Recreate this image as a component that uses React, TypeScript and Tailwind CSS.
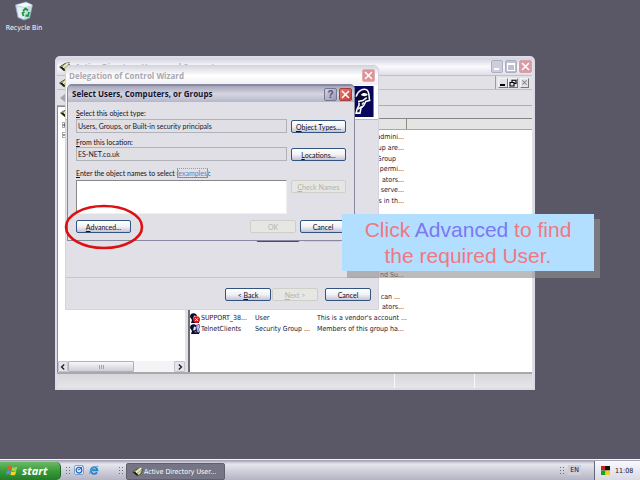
import React from "react";

type BtnProps = {
  children: React.ReactNode;
  className?: string;
  disabled?: boolean;
};

function Btn({ children, className = "", disabled = false }: BtnProps) {
  return (
    <button
      type="button"
      disabled={disabled}
      className={`flex h-[13px] items-center justify-center rounded-[2px] border whitespace-nowrap ${
        disabled
          ? "border-[#cfcfca] bg-[#e6e6e4] text-[#b4b4ac]"
          : "border-[#33547f] bg-linear-to-b from-white via-[#f1f1f6] to-[#c4c4d6] text-[#101020]"
      } ${className}`}
    >
      <span>{children}</span>
    </button>
  );
}

function BookIcon({ className = "" }: { className?: string }) {
  return (
    <svg viewBox="0 0 11 11" className={`h-[11px] w-[11px] shrink-0 ${className}`} aria-hidden="true">
      <path d="M0.5 6 L6 2.5 L10.5 3.5 L8.5 8.5 L5 9.8 Z" fill="#d8dc98" stroke="#3c3c20" strokeWidth="0.8" />
      <path d="M3 6 L8 1.5 L10.5 1.5 L9 4 L4.5 7.5Z" fill="#f2f4d8" stroke="#6c6c48" strokeWidth="0.6" />
      <path d="M1 6.2 L5 9.6 L6.2 8.6 L2.6 5.5Z" fill="#16160c" />
    </svg>
  );
}

function CloseX() {
  return (
    <svg viewBox="0 0 12 12" className="h-[11px] w-[11px] shrink-0" aria-hidden="true">
      <path d="M2.2 2.2 L9.8 9.8 M9.8 2.2 L2.2 9.8" stroke="white" strokeWidth="1.7" />
    </svg>
  );
}

function PersonIcon({ blocked = false }: { blocked?: boolean }) {
  return (
    <svg viewBox="0 0 10 10" className="h-[10px] w-[10px] shrink-0" aria-hidden="true">
      <path d="M0 4 C0 0 3 0 5 0.5 L7 2 L6 4 L9 6 L9 10 L1 10 L2 7 Z" fill="#0a0a30" />
      <path d="M4 2.5 L6 3 L5.5 6 L3 6.5Z" fill="#e8e8ee" />
      {blocked ? (
        <g>
          <circle cx="6.6" cy="6.6" r="3.4" fill="#e41616" />
          <path d="M5.2 5.2 L8 8 M8 5.2 L5.2 8" stroke="white" strokeWidth="0.9" />
        </g>
      ) : (
        <path d="M6 1.5 L9 0 L10 3 L8.5 5 L10 9 L7 8 Z M4 8 L6 6.8 L7 9Z" fill="#b8bce8" stroke="#101050" strokeWidth="0.5" />
      )}
    </svg>
  );
}

type Row = { name?: string; type?: string; desc?: string; align?: string; blocked?: boolean };

const END = "text-right";

const rows: Row[] = [
  { desc: "admini...", align: END },
  { desc: "up are...", align: END },
  { desc: "Group", align: "text-right pr-[8px]" },
  { desc: "permi...", align: END },
  { desc: "ators...", align: END },
  { desc: "serve...", align: END },
  { desc: "s in th...", align: END },
  {},
  {},
  {},
  {},
  {},
  {},
  { desc: "nd Su...", align: END },
  {},
  { desc: "can ...", align: "text-right pr-[4px]" },
  { desc: "ators...", align: END },
  { name: "SUPPORT_38...", type: "User", desc: "This is a vendor's account ...", blocked: true },
  { name: "TelnetClients", type: "Security Group ...", desc: "Members of this group ha..." },
];

function MainWindow() {
  return (
    <section className="absolute top-[56px] left-[55px] flex h-[334px] w-[480px] flex-col rounded-t-[5px] border-2 border-[#dcdce8] bg-[#e2e2e6] pr-px">
      <header className="flex h-[17px] shrink-0 items-center gap-[5px] bg-linear-to-b from-[#d2d2e0] via-[#fafafc] to-[#dedee8] pl-[2px]">
        <BookIcon />
        <h1 className="flex-1 font-['Open_Sans',sans-serif] text-[8px] leading-[10px] font-bold text-[#b4b4be]">
          Active Directory Users and Computers
        </h1>
        <div className="flex gap-[2px]">
          <button type="button" aria-label="Minimise" className="flex h-[13px] w-[12px] items-end rounded-[2px] border border-[#aeaec2] bg-[#cdcddb] p-[2px]">
            <span className="h-[2px] w-[5px] bg-white" />
          </button>
          <button type="button" aria-label="Maximise" className="flex h-[13px] w-[12px] items-center justify-center rounded-[2px] border border-[#aeaec2] bg-[#c0c0d4]">
            <span className="h-[8px] w-[8px] border border-t-2 border-white" />
          </button>
          <button type="button" aria-label="Close window" className="flex h-[13px] w-[13px] items-center justify-center rounded-[2px] border border-[#cfa4ae] bg-[#dc9ba4]">
            <CloseX />
          </button>
        </div>
      </header>

      <div className="flex h-[15px] shrink-0 border-t border-b border-[#c0c0c6]">
        <div className="flex flex-1 items-center border-r border-[#9c9ca4] pl-[2px]">
          <BookIcon />
        </div>
        <div className="flex items-center pr-[3px] pl-[2px]">
          <button type="button" aria-label="Minimise child" className="flex h-[10px] w-[10px] items-end border border-[#f6f6f6] border-r-[#777] border-b-[#777] p-px">
            <span className="h-[2px] w-[5px] bg-black" />
          </button>
          <button type="button" aria-label="Restore child" className="flex h-[10px] w-[10px] items-center justify-center border border-[#f6f6f6] border-r-[#777] border-b-[#777]">
            <svg viewBox="0 0 8 8" className="h-[8px] w-[8px] shrink-0" aria-hidden="true">
              <path d="M3 3 V1.2 H7 V4.5 H5.2 M1 3.5 H5 V7 H1 Z" fill="none" stroke="black" strokeWidth="1.1" />
            </svg>
          </button>
          <button type="button" aria-label="Close child" className="ml-[2px] flex h-[10px] w-[9px] items-center justify-center border border-[#f6f6f6] border-r-[#777] border-b-[#777]">
            <svg viewBox="0 0 8 8" className="h-[7px] w-[7px] shrink-0" aria-hidden="true">
              <path d="M1.5 1.5 L6.5 6.5 M6.5 1.5 L1.5 6.5" stroke="#888" strokeWidth="1.2" />
            </svg>
          </button>
        </div>
      </div>
      <div className="flex h-[16px] shrink-0 items-center border-b border-[#aaaab0] pl-[3px]">
        <svg viewBox="0 0 6 8" className="h-[8px] w-[6px]" aria-hidden="true">
          <path d="M5 0 V8 L0 4Z" fill="#a4a4ac" />
        </svg>
      </div>

      <div className="flex min-h-0 flex-1 border-b-2 border-[#a9a9a9]">
        <nav aria-label="Directory tree" className="flex w-[128px] flex-col border-t border-l border-[#8c8c8c] bg-white">
          <div className="flex flex-1 flex-col items-start gap-[4px] pl-[2px]">
            <BookIcon />
            <span className="ml-[2px] flex h-[6px] w-[6px] items-center justify-center border border-[#aaa]">
              <svg viewBox="0 0 4 4" className="h-[4px] w-[4px]" aria-hidden="true">
                <path d="M0 2 H4 M2 0 V4" stroke="#333" strokeWidth="1" />
              </svg>
            </span>
            <span className="ml-[2px] flex h-[6px] w-[6px] items-center justify-center border border-[#aaa]">
              <svg viewBox="0 0 4 4" className="h-[4px] w-[4px]" aria-hidden="true">
                <path d="M0 2 H4" stroke="#333" strokeWidth="1" />
              </svg>
            </span>
          </div>
          <div className="flex h-[11px] items-stretch bg-[#f4f4f6]">
            <button type="button" aria-label="Scroll left" className="flex w-[10px] items-center justify-center rounded-[1px] border border-[#c4c4ce] bg-[#e4e4ec]">
              <svg viewBox="0 0 6 6" className="h-[6px] w-[6px]" aria-hidden="true">
                <path d="M4.2 0.6 L1.6 3 L4.2 5.4" fill="none" stroke="#222" strokeWidth="1.4" />
              </svg>
            </button>
            <div className="flex flex-1">
              <div className="flex w-[66px] items-center justify-center gap-px rounded-[1px] border border-[#b0b0bc] bg-linear-to-b from-[#f8f8fa] to-[#ceced8]">
                <span className="h-[4px] w-px bg-[#a0a0b0]" />
                <span className="h-[4px] w-px bg-[#a0a0b0]" />
                <span className="h-[4px] w-px bg-[#a0a0b0]" />
              </div>
            </div>
            <button type="button" aria-label="Scroll right" className="flex w-[11px] items-center justify-center rounded-[1px] border border-[#c4c4ce] bg-[#e4e4ec]">
              <svg viewBox="0 0 6 6" className="h-[6px] w-[6px]" aria-hidden="true">
                <path d="M1.8 0.6 L4.4 3 L1.8 5.4" fill="none" stroke="#222" strokeWidth="1.4" />
              </svg>
            </button>
          </div>
        </nav>
        <div className="w-[3px] bg-[#e2e2e6]" />
        <div className="flex min-w-0 flex-1 flex-col border-l-2 border-[#707074] bg-white">
          <div className="h-[13px] shrink-0 border-b border-[#85858a] bg-[#e2e2e6]" />
          <div className="flex h-[11px] shrink-0 border-b border-[#a8a89c] bg-[#e4e4e2]">
            <div className="w-[217px] border-r border-[#8c8c84]" />
          </div>
          <ul className="mt-[2px] flex h-[202px] flex-col whitespace-nowrap text-[#181838]">
            {rows.map((r, i) => (
              <li key={i} className="flex flex-1 items-center">
                <span className="flex w-[65px] items-center gap-px">
                  {r.name ? <PersonIcon blocked={r.blocked} /> : null}
                  <span>{r.name}</span>
                </span>
                <span className="w-[62px]">{r.type}</span>
                <span className={`w-[87px] ${r.align ?? ""}`}>{r.desc}</span>
              </li>
            ))}
          </ul>
        </div>
      </div>
      <footer className="flex h-[14px] shrink-0 bg-linear-to-b from-[#d8d8dc] to-[#e6e6ea]">
        <div className="flex-1 border-r border-[#f8f8f8]" />
        <div className="w-[80px] border-r border-[#f8f8f8]" />
        <div className="w-[57px]" />
      </footer>
    </section>
  );
}

function WizardDialog() {
  return (
    <section className="absolute top-[65px] left-[65px] flex h-[245px] w-[314px] flex-col rounded-t-[5px] border border-[#d4d4de] bg-[#e0e0e6] font-[Lato,sans-serif]">
      <header className="flex h-[19px] shrink-0 items-center justify-between rounded-t-[5px] bg-linear-to-b from-[#d6d6e0] via-white to-[#efeff4] pr-[3px] pl-[3px]">
        <h2 className="font-['Open_Sans',sans-serif] text-[8px] leading-[10px] font-bold text-[#a8a8b0]">Delegation of Control Wizard</h2>
        <button type="button" aria-label="Close wizard" className="flex h-[13px] w-[13px] items-center justify-center rounded-[2px] border border-[#e0b0b0] bg-[#dc9498]">
          <CloseX />
        </button>
      </header>
      <div className="flex h-[35px] shrink-0 items-start justify-end border-b border-[#b8b8c0] bg-white pt-px pr-[4px]">
        <svg viewBox="0 0 30 32" className="h-[31px] w-[30px]" aria-hidden="true">
          <rect width="30" height="32" fill="#06065c" />
          <path d="M12 11 C14 4 20 2.5 23 4 C26 6 25 11 26 15 L22 16 L20 20 L17 23 L16 28 L12 28 L13 24 L15 20 L15 17" fill="#080830" stroke="white" strokeWidth="1.6" />
          <path d="M17 9 C19 6 23 7 24 9 C22 11 19 11 17 9Z" fill="white" />
          <path d="M14 16 L19 15 L23 12 M18 19 L20 17 M14 24 L18 21" fill="none" stroke="white" strokeWidth="1.5" />
        </svg>
      </div>
      <div className="flex flex-1 items-end justify-end gap-[3px] border-b border-[#c6c6cc] pr-[37px] pb-[35px]">
        <Btn className="w-[44px]">Add...</Btn>
        <Btn className="w-[38px]" disabled>
          Remove
        </Btn>
      </div>
      <div className="flex h-[31px] shrink-0 items-start justify-end pt-[10px] pr-[7px]">
        <Btn className="w-[46px]">
          &lt; <u>B</u>ack
        </Btn>
        <Btn className="ml-px w-[46px]" disabled>
          <u>N</u>ext &gt;
        </Btn>
        <Btn className="ml-[7px] w-[46px]">Cancel</Btn>
      </div>
    </section>
  );
}

function SelectDialog() {
  const field = "h-[14px] w-full border border-[#b2b2ba] bg-[#dfdfe4] px-px text-[#202030] outline-none";
  return (
    <section className="absolute top-[84px] left-[67px] flex h-[157px] w-[288px] flex-col rounded-t-[5px] border border-t-2 border-[#8888a0] bg-[#e0e0e6] font-[Lato,sans-serif]">
      <header className="flex h-[16px] shrink-0 items-center gap-[2px] rounded-t-[4px] bg-linear-to-b from-[#a6a6bc] via-[#d6d6e2] to-[#b6b6ca] pr-[2px] pl-[4px]">
        <h2 className="flex-1 font-['Open_Sans',sans-serif] text-[8px] leading-[10px] font-bold text-[#14142c]">Select Users, Computers, or Groups</h2>
        <button type="button" aria-label="Help" className="flex h-[13px] w-[13px] items-center justify-center rounded-[2px] border border-[#77778f] bg-linear-to-br from-[#d4d4e4] to-[#9898b4] font-['Liberation_Sans',sans-serif] text-[10px] leading-[11px] font-bold text-[#50506c]">
          ?
        </button>
        <button type="button" aria-label="Close" className="flex h-[13px] w-[13px] items-center justify-center rounded-[2px] border border-[#a83c3c] bg-linear-to-br from-[#e87c70] to-[#c03c38]">
          <CloseX />
        </button>
      </header>
      <form className="grid grid-cols-[1fr_55px] gap-x-[4px] pt-[6px] pr-[8px] pl-[8px]" onSubmit={(e) => e.preventDefault()}>
        <label htmlFor="otype" className="col-span-2 h-[11px] leading-[10px]">
          <u>S</u>elect this object type:
        </label>
        <input id="otype" readOnly value="Users, Groups, or Built-in security principals" className={field} />
        <Btn className="mt-px">
          <u>O</u>bject Types...
        </Btn>
        <label htmlFor="loc" className="col-span-2 mt-[4px] h-[10px] leading-[10px]">
          <u>F</u>rom this location:
        </label>
        <input id="loc" readOnly value="ES-NET.co.uk" className={field} />
        <Btn className="mt-px">
          <u>L</u>ocations...
        </Btn>
        <div className="col-span-2 mt-[7px] h-[12px] leading-[10px]">
          <label htmlFor="names">
            <u>E</u>nter the object names to select
          </label>{" "}
          (
          <a href="#examples" className="text-[#5a80c8] underline outline-1 outline-[#a09890] outline-dotted">
            examples
          </a>
          ):
        </div>
        <textarea id="names" className="h-[34px] w-full resize-none border border-t-[#88888c] border-r-[#f0f0f0] border-b-[#f0f0f0] border-l-[#88888c] bg-white outline-none" />
        <Btn disabled>
          <u>C</u>heck Names
        </Btn>
        <div className="col-span-2 mt-[6px] flex">
          <Btn className="w-[55px]">
            <u>A</u>dvanced...
          </Btn>
          <Btn className="ml-auto w-[46px]" disabled>
            OK
          </Btn>
          <Btn className="ml-[4px] w-[46px]">Cancel</Btn>
        </div>
      </form>
    </section>
  );
}

function Grip() {
  return (
    <span className="grid grid-cols-2 gap-[2px]">
      {[0, 1, 2, 3, 4, 5].map((n) => (
        <span key={n} className="h-px w-px bg-[#707080]" />
      ))}
    </span>
  );
}

function Taskbar() {
  return (
    <footer className="flex h-[21px] shrink-0 items-stretch border-t border-[#f4f4fa] bg-linear-to-b from-[#9c9cb0] via-[#e6e6ee] via-20% to-[#b4b4c4]">
      <button type="button" className="mt-[2px] flex w-[61px] items-center gap-[4px] rounded-r-[5px] border-r border-[#1d6420] bg-linear-to-b from-[#6cb868] via-[#389c38] to-[#257c28] pl-[6px] font-['Open_Sans',sans-serif] text-[11px] leading-[12px] font-bold text-white italic">
        <svg viewBox="0 0 12 12" className="h-[12px] w-[12px]" aria-hidden="true">
          <path d="M2 1.5 C3.5 0.5 4.5 1 5.8 1.8 L4.9 5.4 C3.5 4.6 2.5 4.6 1 5.2 Z" fill="#e85a28" />
          <path d="M6.4 2 C8 2.8 9.5 2.6 11.4 1.8 L10.3 5.4 C8.5 6.2 7.2 6.2 5.5 5.5 Z" fill="#9cd84c" />
          <path d="M0.9 5.9 C2.3 5.2 3.3 5.3 4.8 6 L3.9 9.6 C2.5 8.8 1.5 8.9 0 9.5 Z" fill="#5c90e8" />
          <path d="M5.3 6.2 C7 7 8.3 6.8 10.2 6.1 L9.2 9.8 C7.5 10.5 6 10.5 4.4 9.8 Z" fill="#f8d030" />
        </svg>
        <span>start</span>
      </button>
      <div className="flex items-center pl-[5px]">
        <Grip />
        <button type="button" aria-label="Outlook Express" className="ml-[4px]">
          <svg viewBox="0 0 10 10" className="h-[10px] w-[10px]" aria-hidden="true">
            <rect x="0.5" y="0.5" width="9" height="9" rx="1.5" fill="#e4eefa" stroke="#78a4d4" />
            <circle cx="5" cy="5.2" r="2.8" fill="none" stroke="#2868b8" strokeWidth="1.3" />
            <path d="M5 5.2 L8.5 1.5 M5 5.2 L3.8 4" fill="none" stroke="#2868b8" strokeWidth="1" />
          </svg>
        </button>
        <button type="button" aria-label="Internet Explorer" className="ml-[5px]">
          <svg viewBox="0 0 10 10" className="h-[10px] w-[10px]" aria-hidden="true">
            <path d="M8 7.2 A3.3 3.3 0 1 1 8.4 5.3 H3" fill="none" stroke="#2684c8" strokeWidth="1.9" />
            <path d="M0.6 9 C-0.5 6 6 0.6 9.4 1.2" fill="none" stroke="#50a8dc" strokeWidth="0.9" />
          </svg>
        </button>
        <div className="ml-[20px]">
          <Grip />
        </div>
      </div>
      <button type="button" className="mt-[3px] ml-[3px] flex w-[99px] items-center gap-px rounded-[2px] border border-[#606070] bg-[#757585] pl-[5px] whitespace-nowrap text-white">
        <BookIcon />
        <span>Active Directory User...</span>
      </button>
      <div className="ml-auto flex items-center pr-[13px]">
        <Grip />
        <span className="ml-[4px] bg-[#cfcfdb] px-[2px] leading-[10px] text-[#101028]">EN</span>
      </div>
      <div className="mt-px flex w-[46px] items-center gap-[5px] border-l border-[#666680] bg-linear-to-b from-[#f8f8fc] to-[#dadae6] pl-[6px] text-[#101020]">
        <svg viewBox="0 0 9 9" className="h-[9px] w-[9px]" aria-hidden="true">
          <rect width="4.5" height="4.5" fill="#c82020" />
          <rect x="4" width="5" height="4.5" fill="#101010" />
          <rect y="4.5" width="4.5" height="4.5" fill="#20a028" />
          <rect x="4.5" y="4.5" width="4.5" height="4.5" fill="#f0d020" />
        </svg>
        <span>11:08</span>
      </div>
    </footer>
  );
}

export default function App() {
  return (
    <div className="flex h-screen flex-col overflow-hidden bg-[#5a5866] font-['DejaVu_Sans_Condensed','DejaVu_Sans',sans-serif] text-[7px] leading-[10px] text-[#101020]">
      <main className="relative min-h-0 flex-1">
        <div className="flex w-[48px] flex-col items-center pt-px text-white">
          <svg viewBox="0 0 20 20" className="h-[20px] w-[20px]" aria-hidden="true">
            <path d="M1.5 4 L12 1 L18.5 4 L15.5 17 L10 19 L4 16.5 Z" fill="#c8dce8" stroke="#8fb0c4" strokeWidth="0.7" />
            <path d="M2 4 L11 6 L18 4 L12 1.5Z" fill="#f6fafc" />
            <path d="M3 6 L10.5 7 L10 18 L4.6 16Z" fill="#e4eef4" />
            <path d="M9 10 L11.5 7.5 L14 9.5 M15 11 L14 15 L11.5 14.5 M9.5 15 L8.5 12 L10.5 11" fill="none" stroke="#18983c" strokeWidth="1.8" />
          </svg>
          <span className="mt-[2px]">Recycle Bin</span>
        </div>

        <MainWindow />
        <WizardDialog />
        <SelectDialog />

        <svg viewBox="0 0 80 46" className="pointer-events-none absolute top-[204px] left-[64px] h-[46px] w-[80px]" aria-hidden="true">
          <ellipse cx="40" cy="23" rx="38" ry="21" fill="none" stroke="#dc1010" strokeWidth="2.6" />
        </svg>

        <div className="absolute top-[219px] left-[347px] h-[59px] w-[253px] bg-[#909090]/60" />
        <p className="absolute top-[214px] left-[342px] flex h-[57px] w-[252px] items-center justify-center bg-[#b2deff] text-center font-['Liberation_Sans',Arial,sans-serif] text-[21px] leading-[26px] text-[#f07880]">
          <span>
            Click <span className="text-[#7c78f0]">Advanced</span> to find
            <br />
            the required User.
          </span>
        </p>
      </main>
      <Taskbar />
    </div>
  );
}
